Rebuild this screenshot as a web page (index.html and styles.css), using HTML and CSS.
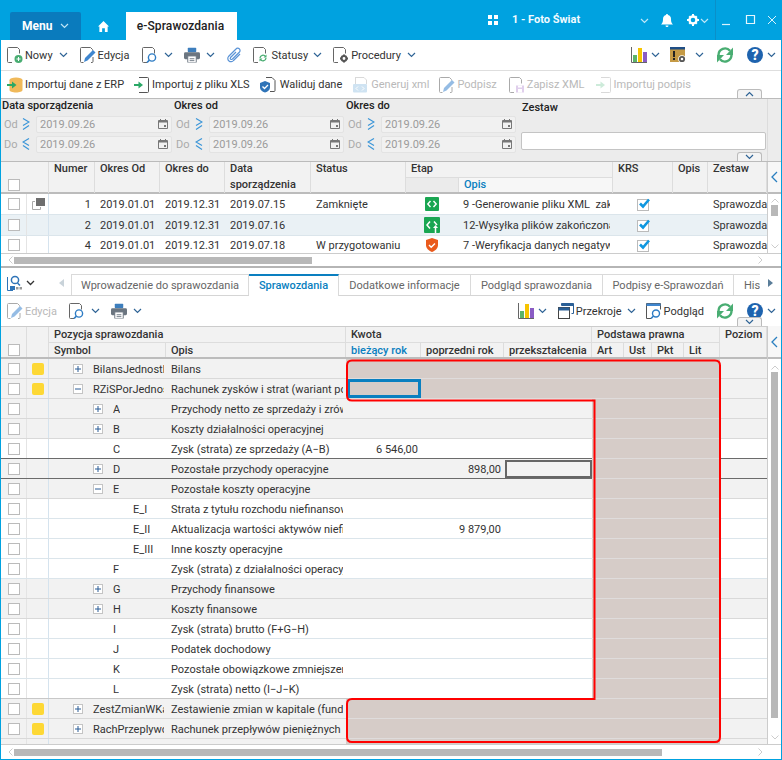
FILE: index.html
```html
<!DOCTYPE html>
<html lang="pl">
<head>
<meta charset="utf-8">
<title>e-Sprawozdania</title>
<link rel="stylesheet" href="styles.css">
</head>
<body>
<svg class="defs" width="0" height="0" aria-hidden="true">
  <symbol id="chev" viewBox="0 0 9 6"><path d="M1 1l3.5 3.5L8 1" fill="none" stroke="#2f6496" stroke-width="1.2"/></symbol>
  <symbol id="chevw" viewBox="0 0 9 6"><path d="M1 1l3.5 3.5L8 1" fill="none" stroke="#bfe6f7" stroke-width="1.2"/></symbol>
  <symbol id="page" viewBox="0 0 16 16"><path d="M5 15.500H1.500a1 1 0 0 1-1-1V1.500a1 1 0 0 1 1-1h9l2 2v4" fill="none" stroke="#666"/></symbol>
  <symbol id="preview" viewBox="0 0 16 16"><path d="M5 15.500H1.500a1 1 0 0 1-1-1V1.500a1 1 0 0 1 1-1h9l2 2v4" fill="none" stroke="#666"/><circle cx="10" cy="10.500" r="3.600" fill="none" stroke="#2e7cc4" stroke-width="1.400"/><path d="M7.400 13.200L5 15.500" stroke="#2e7cc4" stroke-width="1.600"/></symbol>
  <symbol id="pencil" viewBox="0 0 16 16"><path d="M3.500 15.500H1.500a1 1 0 0 1-1-1V1.500a1 1 0 0 1 1-1h9l2 2v1M13 10v4.500a1 1 0 0 1-1 1h-1" fill="none" stroke="#666"/><path d="M4 15l1-4 8-8 2.500 2.500-8 8z" fill="#3f86cf"/></symbol>
  <symbol id="printer" viewBox="0 0 17 16"><rect x="4" y="0" width="9" height="5" rx="1" fill="#3d7ebd"/><rect x="0" y="5" width="17" height="7.500" rx="1.500" fill="#6b7580"/><rect x="4" y="9" width="9" height="7" fill="#fff" stroke="#6b7580"/><path d="M6 12h5M6 14h5" stroke="#6b7580"/></symbol>
  <symbol id="arrows" viewBox="0 0 16 16"><path d="M1.500 8A6.500 6.500 0 0 1 13 3.800" fill="none" stroke="#49ad72" stroke-width="2.400"/><path d="M16 .5V8H9z" fill="#49ad72"/><path d="M14.500 8A6.500 6.500 0 0 1 3 12.200" fill="none" stroke="#49ad72" stroke-width="2.400"/><path d="M0 15.500V8h7z" fill="#49ad72"/></symbol>
  <symbol id="chart" viewBox="0 0 16 16"><path d="M.5 0v15.500H16" fill="none" stroke="#666"/><rect x="2" y="8" width="4" height="7" fill="#5cb46a"/><rect x="7" y="1" width="4" height="14" fill="#f7c400"/><rect x="12" y="5" width="4" height="10" fill="#8a5cc4"/></symbol>
  <symbol id="help" viewBox="0 0 16 16"><circle cx="8" cy="8" r="8" fill="#1e63ae"/><text x="8" y="13" text-anchor="middle" font-family="Roboto" font-weight="900" font-size="14" fill="#fff">?</text></symbol>
  <symbol id="cal" viewBox="0 0 10 10"><path d="M.5 1.500h9v8h-9z" fill="none" stroke="#777"/><path d="M.5 2h9v1.500h-9zM2 0h1v2H2zM7 0h1v2H7zM6 6h2v2H6z" fill="#777"/></symbol>
  <symbol id="dblr" viewBox="0 0 8 12"><path d="M1 .5L7 4 1 7.500M7 7.500L1 11.500" fill="none" stroke="#3a95d8" stroke-width="1.200"/></symbol>
  <symbol id="dbll" viewBox="0 0 8 12"><path d="M7 .5L1 4l6 3.500M1 7.500l6 4" fill="none" stroke="#3a95d8" stroke-width="1.200"/></symbol>
  <symbol id="tick" viewBox="0 0 13 13"><rect x=".5" y="1.500" width="11" height="11" fill="#fff" stroke="#bbb"/><path d="M3 5.500l3 3L12 1.500" fill="none" stroke="#0f97e0" stroke-width="2.600"/></symbol>
  <symbol id="plus" viewBox="0 0 10 10"><rect x=".5" y=".5" width="9" height="9" fill="#fff" stroke="#c4c4c4"/><path d="M2 5h6M5 2v6" stroke="#2a5c96"/></symbol>
  <symbol id="minus" viewBox="0 0 10 10"><rect x=".5" y=".5" width="9" height="9" fill="#fff" stroke="#c4c4c4"/><path d="M2 5h6" stroke="#2a5c96"/></symbol>
</svg>

<div class="window">
  <header class="topbar">
    <div class="menu">Menu <svg class="chev-top"><use href="#chevw"/></svg></div>
    <svg class="home" viewBox="0 0 12 12"><path d="M6 0l6 6h-1.500v6H7.500V8h-3v4H1.500V6H0z" fill="#fff"/></svg>
    <div class="apptab">e-Sprawozdania</div>
    <div class="grow"></div>
    <svg class="apps" viewBox="0 0 10 10"><path d="M0 0h4v4H0zM6 0h4v4H6zM0 6h4v4H0zM6 6h4v4H6z" fill="#fff"/></svg>
    <div class="company">1 - Foto Świat</div>
    <svg class="chev-top c1"><use href="#chevw"/></svg>
    <svg class="bell" viewBox="0 0 12 13"><path d="M6 0c.7 0 1 .5 1 1 2 .5 3 2 3 4 0 3 .5 4 2 5.500H0C1.500 9 2 8 2 5c0-2 1-3.500 3-4 0-.5.3-1 1-1zM4.500 11.500h3a1.500 1.500 0 0 1-3 0z" fill="#fff"/></svg>
    <svg class="gear" viewBox="0 0 12 12"><circle cx="6" cy="6" r="3.500" fill="none" stroke="#fff" stroke-width="2.400"/><path d="M5 0h2v2H5zM5 10h2v2H5zM0 5h2v2H0zM10 5h2v2h-2zM1.500 3L3 1.500 4 2.500 2.500 4zM9 1.500L10.500 3 9.500 4 8 2.500zM1.500 9L3 10.500 4 9.500 2.500 8zM10.500 9L9 10.500 8 9.500 9.500 8z" fill="#fff"/></svg>
    <svg class="chev-top c2"><use href="#chevw"/></svg>
    <div class="winbtns">
      <svg class="wb" viewBox="0 0 12 12"><path d="M1 10.500h8" stroke="#d9f2fc" stroke-width="1.200"/></svg>
      <svg class="wb" viewBox="0 0 12 12"><path d="M2.500 1.500h8v8h-8z" fill="none" stroke="#e6f6fd" stroke-width="1.200"/></svg>
      <svg class="wb" viewBox="0 0 12 12"><path d="M2 2l8 8M10 2l-8 8" stroke="#d9f2fc" stroke-width="1"/></svg>
    </div>
  </header>

  <main class="content">
    <div class="tb tb1">
      <span class="btn"><svg class="ic" viewBox="0 0 16 16"><use href="#page"/><circle cx="11.500" cy="12" r="4" fill="#49ad72"/><path d="M9.500 12h4M11.500 10v4" stroke="#fff"/></svg>Nowy</span>
      <svg class="chev m6"><use href="#chev"/></svg>
      <span class="btn m12"><svg class="ic" viewBox="0 0 16 16"><use href="#pencil"/></svg>Edycja</span>
      <svg class="ic m13" viewBox="0 0 16 16"><use href="#preview"/></svg>
      <svg class="chev m6"><use href="#chev"/></svg>
      <svg class="ic m11" viewBox="0 0 17 16"><use href="#printer"/></svg>
      <svg class="chev m6"><use href="#chev"/></svg>
      <svg class="ic m11" viewBox="0 0 16 16"><path d="M14 7l-6.500 6.500a3 3 0 0 1-5-4L10 2a2.200 2.200 0 0 1 3.500 3L6.500 12a1.100 1.100 0 0 1-2-1.500L10 5" fill="none" stroke="#5a93d6" stroke-width="1.200"/></svg>
      <span class="btn m11"><svg class="ic" viewBox="0 0 16 16"><use href="#page"/><path d="M7 11a3 3 0 0 1 5.500-1.500M13 11a3 3 0 0 1-5.500 1.500" fill="none" stroke="#49ad72" stroke-width="1.300"/><path d="M13.500 7.500v3h-3zM6.500 14.500v-3h3z" fill="#49ad72"/></svg>Statusy</span>
      <svg class="chev m5"><use href="#chev"/></svg>
      <span class="btn m11"><svg class="ic" viewBox="0 0 16 16"><use href="#page"/><circle cx="11" cy="11.500" r="2.400" fill="none" stroke="#555" stroke-width="2"/><path d="M10 7.500h2v1.500h-2zM10 14h2v1.500h-2zM7 10.500h1.500v2H7zM13.500 10.500H15v2h-1.500z" fill="#555"/></svg>Procedury</span>
      <svg class="chev m6"><use href="#chev"/></svg>
      <div class="grow"></div>
      <svg class="ic" viewBox="0 0 16 16"><use href="#chart"/></svg>
      <svg class="chev m4"><use href="#chev"/></svg>
      <svg class="ic m10" viewBox="0 0 16 16"><rect width="15" height="15" fill="#c59a45"/><rect width="15" height="2.500" fill="#1f4e86"/><rect x="3" y="4" width="2" height="6" fill="#222"/><rect x="3" y="11" width="2" height="2" fill="#222"/><circle cx="12" cy="12" r="3.800" fill="#fff"/><circle cx="12" cy="12" r="2.200" fill="none" stroke="#555" stroke-width="1.800"/></svg>
      <svg class="chev m9"><use href="#chev"/></svg>
      <svg class="ic m13" viewBox="0 0 16 16"><use href="#arrows"/></svg>
      <svg class="ic m14" viewBox="0 0 16 16"><use href="#help"/></svg>
      <svg class="chev m4 last"><use href="#chev"/></svg>
    </div>

    <div class="tb tb2">
      <span class="btn"><svg class="ic" viewBox="0 0 16 16"><ellipse cx="9" cy="3" rx="6.500" ry="2.500" fill="#f0b95a"/><path d="M2.500 3v10c0 1.500 3 2.500 6.500 2.500s6.500-1 6.500-2.500V3z" fill="#f0b95a"/><path d="M0 8h7" stroke="#2aa866" stroke-width="2"/><path d="M5 4.500L9.500 8 5 11.500z" fill="#2aa866"/></svg>Importuj dane z ERP</span>
      <span class="btn m10"><svg class="ic" viewBox="0 0 16 16"><path d="M5 .5h8.500a1 1 0 0 1 1 1v13a1 1 0 0 1-1 1H5" fill="none" stroke="#555"/><path d="M0 8h5.500" stroke="#2aa866" stroke-width="2"/><path d="M4.500 4.500L9 8l-4.500 3.500z" fill="#2aa866"/></svg>Importuj z pliku XLS</span>
      <span class="btn m10 gap4"><svg class="ic" viewBox="0 0 16 16"><path d="M6 .5h6l3 3v10a1 1 0 0 1-1 1h-4" fill="none" stroke="#555"/><path d="M5 4l5 2v4.500c0 2.500-2 4-5 5-3-1-5-2.500-5-5V6z" fill="#2f74b8"/><path d="M2.500 9.500L4.500 11.500 8 8" fill="none" stroke="#fff" stroke-width="1.300"/></svg>Waliduj dane</span>
      <span class="btn off m11"><svg class="ic" viewBox="0 0 16 16"><path d="M2 .5h9l2.500 2.500v4M2.500 7V1" fill="none" stroke="#bbb"/><rect x="0" y="7" width="14" height="8.500" rx="1" fill="#a9cde8"/><path d="M5 9.500L3 11.500l2 2M9 9.500l2 2-2 2" fill="none" stroke="#fff"/></svg>Generuj xml</span>
      <span class="btn off m10"><svg class="ic" viewBox="0 0 16 16"><use href="#pencil"/></svg>Podpisz</span>
      <span class="btn off m12"><svg class="ic" viewBox="0 0 16 16"><use href="#page"/><rect x="7" y="8.500" width="8" height="7" fill="#c8a9de"/><rect x="9" y="8.500" width="4" height="2" fill="#fff"/><rect x="9" y="12" width="4" height="3.500" fill="#fff"/></svg>Zapisz XML</span>
      <span class="btn off m11"><svg class="ic" viewBox="0 0 16 16"><path d="M5 .5h8.500a1 1 0 0 1 1 1v13a1 1 0 0 1-1 1H5" fill="none" stroke="#bbb"/><path d="M0 8h5.500" stroke="#a6dcbd" stroke-width="2"/><path d="M4.500 4.500L9 8l-4.500 3.500z" fill="#a6dcbd"/></svg>Importuj podpis</span>
      <div class="fold up"><svg class="chev"><use href="#chev"/></svg></div>
    </div>

    <section class="filters">
      <div class="fgroup">
        <div class="flabel">Data sporządzenia</div>
        <div class="frow"><span class="fk">Od</span><svg class="dbl"><use href="#dblr"/></svg><div class="finput">2019.09.26<svg class="calic"><use href="#cal"/></svg></div></div>
        <div class="frow"><span class="fk">Do</span><svg class="dbl"><use href="#dbll"/></svg><div class="finput">2019.09.26<svg class="calic"><use href="#cal"/></svg></div></div>
      </div>
      <div class="fgroup">
        <div class="flabel">Okres od</div>
        <div class="frow"><span class="fk">Od</span><svg class="dbl"><use href="#dblr"/></svg><div class="finput">2019.09.26<svg class="calic"><use href="#cal"/></svg></div></div>
        <div class="frow"><span class="fk">Do</span><svg class="dbl"><use href="#dbll"/></svg><div class="finput">2019.09.26<svg class="calic"><use href="#cal"/></svg></div></div>
      </div>
      <div class="fgroup">
        <div class="flabel">Okres do</div>
        <div class="frow"><span class="fk">Od</span><svg class="dbl"><use href="#dblr"/></svg><div class="finput">2019.09.26<svg class="calic"><use href="#cal"/></svg></div></div>
        <div class="frow"><span class="fk">Do</span><svg class="dbl"><use href="#dbll"/></svg><div class="finput">2019.09.26<svg class="calic"><use href="#cal"/></svg></div></div>
      </div>
      <div class="fset">
        <div class="flabel">Zestaw</div>
        <div class="fsetinput"></div>
      </div>
      <div class="fside"></div>
      <div class="fold down"><svg class="chev"><use href="#chev"/></svg></div>
    </section>

    <section class="upper">
      <div class="ugrid">
        <div class="uhead">
          <div class="h hcheck"><span class="box"></span></div>
          <div class="h"></div>
          <div class="h">Numer</div>
          <div class="h">Okres Od</div>
          <div class="h">Okres do</div>
          <div class="h hwrap">Data<br>sporządzenia</div>
          <div class="h">Status</div>
          <div class="h hetap">
            <div class="etap-top">Etap</div>
            <div class="etap-sub"><span class="etap-blank"></span><span class="etap-opis">Opis</span></div>
          </div>
          <div class="h">KRS</div>
          <div class="h">Opis</div>
          <div class="h">Zestaw</div>
        </div>
        <div class="urow">
          <div class="c cc"><span class="box"></span></div>
          <div class="c cc"><svg class="copyic" viewBox="0 0 13 12"><path d="M3 3.500H.5v8h8V9" fill="none" stroke="#aaa"/><rect x="4" y="0" width="9" height="8" fill="#6e6e6e"/></svg></div>
          <div class="c num">1</div><div class="c">2019.01.01</div><div class="c">2019.12.31</div><div class="c">2019.07.15</div><div class="c">Zamknięte</div>
          <div class="c cc"><svg class="etapic" viewBox="0 0 14 14"><rect width="14" height="14" rx="1" fill="#1aa652"/><path d="M5.500 4L2.800 7l2.700 3M8.500 4l2.700 3-2.700 3" fill="none" stroke="#fff" stroke-width="1.400"/></svg></div>
          <div class="c">9 -Generowanie pliku XML  zakończone</div>
          <div class="c cc"><svg class="tick"><use href="#tick"/></svg></div><div class="c"></div><div class="c">Sprawozdanie</div>
        </div>
        <div class="urow alt">
          <div class="c cc"><span class="box"></span></div>
          <div class="c cc"></div>
          <div class="c num">2</div><div class="c">2019.01.01</div><div class="c">2019.12.31</div><div class="c">2019.07.16</div><div class="c"></div>
          <div class="c cc"><svg class="etapic wide" viewBox="0 0 16 16"><rect width="16" height="16" rx="1" fill="#1aa652"/><path d="M6 4.500L3 8l3 3.500M10 4.500L13 8M11.500 16v-6" fill="none" stroke="#fff" stroke-width="1.500"/><path d="M9 11l2.500-3 2.500 3z" fill="#fff"/></svg></div>
          <div class="c">12-Wysyłka plików zakończona</div>
          <div class="c cc"><svg class="tick"><use href="#tick"/></svg></div><div class="c"></div><div class="c">Sprawozdanie</div>
        </div>
        <div class="urow cut">
          <div class="c cc"><span class="box"></span></div>
          <div class="c cc"></div>
          <div class="c num">4</div><div class="c">2019.01.01</div><div class="c">2019.12.31</div><div class="c">2019.07.18</div><div class="c">W przygotowaniu</div>
          <div class="c cc"><svg class="shieldic" viewBox="0 0 12 14"><path d="M6 0l6 2v5c0 3.500-2.500 5.500-6 7-3.500-1.500-6-3.500-6-7V2z" fill="#ea5a1c"/><path d="M3 7l2.200 2.200L9 5.500" fill="none" stroke="#fff" stroke-width="1.400"/></svg></div>
          <div class="c">7 -Weryfikacja danych negatywna</div>
          <div class="c cc"><svg class="tick"><use href="#tick"/></svg></div><div class="c"></div><div class="c">Sprawozdanie</div>
        </div>
      </div>
      <aside class="side">
        <div class="sidehead uside"><svg class="sidearrow" viewBox="0 0 7 12"><path d="M6 1L1 6l5 5" fill="none" stroke="#2a7fc0" stroke-width="1.300"/></svg></div>
        <div class="vscroll small"><svg class="sa" viewBox="0 0 8 5"><path d="M.5 4.500L4 1l3.500 3.500" fill="none" stroke="#ccc"/></svg><div class="vthumb t1"></div><div class="grow"></div><svg class="sa" viewBox="0 0 8 5"><path d="M.5.500L4 4 7.500.500" fill="none" stroke="#ccc"/></svg></div>
      </aside>
    </section>
    <div class="hscroll hs1"><svg class="sah" viewBox="0 0 5 8"><path d="M4.500.5L1 4l3.500 3.500" fill="none" stroke="#ccc"/></svg><div class="hthumb t1"></div><div class="grow"></div><svg class="sah r" viewBox="0 0 5 8"><path d="M.5.5L4 4 .5 7.500" fill="none" stroke="#ccc"/></svg></div>

    <div class="splitter"></div>

    <nav class="tabsrow">
      <svg class="lookic" viewBox="0 0 16 16"><path d="M.5 2v13.500H6" fill="none" stroke="#2f74b8"/><circle cx="8" cy="5" r="3.600" fill="none" stroke="#2f74b8" stroke-width="1.500"/><path d="M10.500 8l2.500 2.500" stroke="#2f74b8" stroke-width="1.500"/><rect x="3" y="11" width="5" height="4" fill="#2f74b8"/><rect x="9" y="12" width="2.500" height="2.500" fill="#999"/><rect x="12.500" y="12" width="2.500" height="2.500" fill="#999"/></svg>
      <svg class="chevdark" viewBox="0 0 9 6"><path d="M1 1l3.500 3.500L8 1" fill="none" stroke="#333" stroke-width="1.300"/></svg>
      <svg class="tabarrow" viewBox="0 0 5 8"><path d="M5 0v8L0 4z" fill="#c9d3da"/></svg>
      <div class="tab t1">Wprowadzenie do sprawozdania</div>
      <div class="tab active t2">Sprawozdania</div>
      <div class="tab t3">Dodatkowe informacje</div>
      <div class="tab t4">Podgląd sprawozdania</div>
      <div class="tab t5">Podpisy e-Sprawozdań</div>
      <div class="tab t6">Historia</div>
      <svg class="tabarrow r" viewBox="0 0 5 8"><path d="M0 0v8l5-4z" fill="#5a7d99"/></svg>
    </nav>

    <div class="tb tb3">
      <span class="btn off"><svg class="ic" viewBox="0 0 16 16"><use href="#pencil"/></svg>Edycja</span>
      <svg class="ic m12" viewBox="0 0 16 16"><use href="#preview"/></svg>
      <svg class="chev m6"><use href="#chev"/></svg>
      <svg class="ic m11" viewBox="0 0 17 16"><use href="#printer"/></svg>
      <svg class="chev m6"><use href="#chev"/></svg>
      <div class="grow"></div>
      <svg class="ic" viewBox="0 0 16 16"><use href="#chart"/></svg>
      <svg class="chev m4"><use href="#chev"/></svg>
      <span class="btn m11"><svg class="ic" viewBox="0 0 16 16"><path d="M3.500 2.500V.5h12v10h-2" fill="none" stroke="#2a5f96"/><rect x="3.500" y=".5" width="12" height="2.500" fill="#2a5f96"/><rect x=".5" y="4.500" width="11" height="11" fill="#fff" stroke="#444"/><rect x=".5" y="4.500" width="11" height="3" fill="#2a5f96"/></svg>Przekroje</span>
      <svg class="chev m5"><use href="#chev"/></svg>
      <span class="btn m10"><svg class="ic" viewBox="0 0 16 16"><path d="M5 15.500H.5V.5h14v6" fill="none" stroke="#555"/><path d="M.5.500h14V3H.5z" fill="#3f86cf"/><circle cx="10" cy="10.500" r="3.500" fill="none" stroke="#2e7cc4" stroke-width="1.400"/><path d="M7.500 13L5 15.500" stroke="#2e7cc4" stroke-width="1.600"/></svg>Podgląd</span>
      <svg class="ic m13" viewBox="0 0 16 16"><use href="#arrows"/></svg>
      <svg class="ic m14" viewBox="0 0 16 16"><use href="#help"/></svg>
      <svg class="chev m4 last"><use href="#chev"/></svg>
      <div class="fold down3"><svg class="chev"><use href="#chev"/></svg></div>
    </div>

    <section class="lower">
      <div class="lgrid">
        <div class="lhead">
          <div class="lh hcheck lspan a1"><span class="box"></span></div>
          <div class="lh lspan a2"></div>
          <div class="lh g2">Pozycja sprawozdania</div>
          <div class="lh g3">Kwota</div>
          <div class="lh g4">Podstawa prawna</div>
          <div class="lh lspan a12">Poziom</div>
          <div class="lh2">Symbol</div>
          <div class="lh2">Opis</div>
          <div class="lh2 blue">bieżący rok</div>
          <div class="lh2">poprzedni rok</div>
          <div class="lh2">przekształcenia</div>
          <div class="lh2">Art</div>
          <div class="lh2">Ust</div>
          <div class="lh2">Pkt</div>
          <div class="lh2">Lit</div>
        </div>

        <div class="lrow grey">
          <div class="l cc"><span class="box"></span></div><div class="l cc"><span class="mark"></span></div>
          <div class="l sym lv1"><svg class="tg"><use href="#plus"/></svg><span class="clip">BilansJednostkowy</span></div>
          <div class="l">Bilans</div><div class="l amt sel"></div><div class="l amt sel"></div><div class="l amt sel"></div><div class="l sel"></div><div class="l"></div>
        </div>
        <div class="lrow grey">
          <div class="l cc"><span class="box"></span></div><div class="l cc"><span class="mark"></span></div>
          <div class="l sym lv1"><svg class="tg"><use href="#minus"/></svg><span class="clip">RZiSPorJednostkowy</span></div>
          <div class="l">Rachunek zysków i strat (wariant porównawczy)</div><div class="l amt sel focus"></div><div class="l amt sel"></div><div class="l amt sel"></div><div class="l sel"></div><div class="l"></div>
        </div>
        <div class="lrow grey">
          <div class="l cc"><span class="box"></span></div><div class="l cc"></div>
          <div class="l sym lv2"><svg class="tg"><use href="#plus"/></svg><span class="clip">A</span></div>
          <div class="l">Przychody netto ze sprzedaży i zrównane z nimi</div><div class="l amt"></div><div class="l amt"></div><div class="l amt"></div><div class="l sel"></div><div class="l"></div>
        </div>
        <div class="lrow grey">
          <div class="l cc"><span class="box"></span></div><div class="l cc"></div>
          <div class="l sym lv2"><svg class="tg"><use href="#plus"/></svg><span class="clip">B</span></div>
          <div class="l">Koszty działalności operacyjnej</div><div class="l amt"></div><div class="l amt"></div><div class="l amt"></div><div class="l sel"></div><div class="l"></div>
        </div>
        <div class="lrow">
          <div class="l cc"><span class="box"></span></div><div class="l cc"></div>
          <div class="l sym lv2 notg"><span class="clip">C</span></div>
          <div class="l">Zysk (strata) ze sprzedaży (A−B)</div><div class="l amt">6 546,00</div><div class="l amt"></div><div class="l amt"></div><div class="l sel"></div><div class="l"></div>
        </div>
        <div class="lrow grey darkline">
          <div class="l cc"><span class="box"></span></div><div class="l cc"></div>
          <div class="l sym lv2"><svg class="tg"><use href="#plus"/></svg><span class="clip">D</span></div>
          <div class="l">Pozostałe przychody operacyjne</div><div class="l amt"></div><div class="l amt">898,00</div><div class="l amt focus2"></div><div class="l sel"></div><div class="l"></div>
        </div>
        <div class="lrow grey">
          <div class="l cc"><span class="box"></span></div><div class="l cc"></div>
          <div class="l sym lv2"><svg class="tg"><use href="#minus"/></svg><span class="clip">E</span></div>
          <div class="l">Pozostałe koszty operacyjne</div><div class="l amt"></div><div class="l amt"></div><div class="l amt"></div><div class="l sel"></div><div class="l"></div>
        </div>
        <div class="lrow">
          <div class="l cc"><span class="box"></span></div><div class="l cc"></div>
          <div class="l sym lv3"><span class="clip">E_I</span></div>
          <div class="l">Strata z tytułu rozchodu niefinansowych aktywów</div><div class="l amt"></div><div class="l amt"></div><div class="l amt"></div><div class="l sel"></div><div class="l"></div>
        </div>
        <div class="lrow">
          <div class="l cc"><span class="box"></span></div><div class="l cc"></div>
          <div class="l sym lv3"><span class="clip">E_II</span></div>
          <div class="l">Aktualizacja wartości aktywów niefinansowych</div><div class="l amt"></div><div class="l amt">9 879,00</div><div class="l amt"></div><div class="l sel"></div><div class="l"></div>
        </div>
        <div class="lrow">
          <div class="l cc"><span class="box"></span></div><div class="l cc"></div>
          <div class="l sym lv3"><span class="clip">E_III</span></div>
          <div class="l">Inne koszty operacyjne</div><div class="l amt"></div><div class="l amt"></div><div class="l amt"></div><div class="l sel"></div><div class="l"></div>
        </div>
        <div class="lrow">
          <div class="l cc"><span class="box"></span></div><div class="l cc"></div>
          <div class="l sym lv2 notg"><span class="clip">F</span></div>
          <div class="l">Zysk (strata) z działalności operacyjnej</div><div class="l amt"></div><div class="l amt"></div><div class="l amt"></div><div class="l sel"></div><div class="l"></div>
        </div>
        <div class="lrow grey">
          <div class="l cc"><span class="box"></span></div><div class="l cc"></div>
          <div class="l sym lv2"><svg class="tg"><use href="#plus"/></svg><span class="clip">G</span></div>
          <div class="l">Przychody finansowe</div><div class="l amt"></div><div class="l amt"></div><div class="l amt"></div><div class="l sel"></div><div class="l"></div>
        </div>
        <div class="lrow grey">
          <div class="l cc"><span class="box"></span></div><div class="l cc"></div>
          <div class="l sym lv2"><svg class="tg"><use href="#plus"/></svg><span class="clip">H</span></div>
          <div class="l">Koszty finansowe</div><div class="l amt"></div><div class="l amt"></div><div class="l amt"></div><div class="l sel"></div><div class="l"></div>
        </div>
        <div class="lrow">
          <div class="l cc"><span class="box"></span></div><div class="l cc"></div>
          <div class="l sym lv2 notg"><span class="clip">I</span></div>
          <div class="l">Zysk (strata) brutto (F+G−H)</div><div class="l amt"></div><div class="l amt"></div><div class="l amt"></div><div class="l sel"></div><div class="l"></div>
        </div>
        <div class="lrow">
          <div class="l cc"><span class="box"></span></div><div class="l cc"></div>
          <div class="l sym lv2 notg"><span class="clip">J</span></div>
          <div class="l">Podatek dochodowy</div><div class="l amt"></div><div class="l amt"></div><div class="l amt"></div><div class="l sel"></div><div class="l"></div>
        </div>
        <div class="lrow">
          <div class="l cc"><span class="box"></span></div><div class="l cc"></div>
          <div class="l sym lv2 notg"><span class="clip">K</span></div>
          <div class="l">Pozostałe obowiązkowe zmniejszenia zysku</div><div class="l amt"></div><div class="l amt"></div><div class="l amt"></div><div class="l sel"></div><div class="l"></div>
        </div>
        <div class="lrow">
          <div class="l cc"><span class="box"></span></div><div class="l cc"></div>
          <div class="l sym lv2 notg"><span class="clip">L</span></div>
          <div class="l">Zysk (strata) netto (I−J−K)</div><div class="l amt"></div><div class="l amt"></div><div class="l amt"></div><div class="l sel"></div><div class="l"></div>
        </div>
        <div class="lrow grey graytop">
          <div class="l cc"><span class="box"></span></div><div class="l cc"><span class="mark"></span></div>
          <div class="l sym lv1"><svg class="tg"><use href="#plus"/></svg><span class="clip">ZestZmianWKapitale</span></div>
          <div class="l">Zestawienie zmian w kapitale (funduszu) własnym</div><div class="l amt sel"></div><div class="l amt sel"></div><div class="l amt sel"></div><div class="l sel"></div><div class="l"></div>
        </div>
        <div class="lrow grey">
          <div class="l cc"><span class="box"></span></div><div class="l cc"><span class="mark"></span></div>
          <div class="l sym lv1"><svg class="tg"><use href="#plus"/></svg><span class="clip">RachPrzeplywow</span></div>
          <div class="l">Rachunek przepływów pieniężnych</div><div class="l amt sel"></div><div class="l amt sel"></div><div class="l amt sel"></div><div class="l sel"></div><div class="l"></div>
        </div>
        <div class="lrow grey tail">
          <div class="l cc"><span class="box"></span></div><div class="l cc"></div><div class="l"></div><div class="l"></div><div class="l amt sel"></div><div class="l amt sel"></div><div class="l amt sel"></div><div class="l sel"></div><div class="l"></div>
        </div>
        <svg class="redmark" viewBox="0 0 766 386" width="766" height="386"><path d="M351 1.500H714q5 0 5 5V378q0 5-5 5H351q-5 0-5-5V345q0-5 5-5H593.500V41.500H351q-5 0-5-5V6.500q0-5 5-5z" fill="none" stroke="#f00" stroke-width="2"/></svg>
      </div>
      <aside class="side lside">
        <div class="sidehead"><svg class="sidearrow" viewBox="0 0 7 12"><path d="M6 1L1 6l5 5" fill="none" stroke="#2a7fc0" stroke-width="1.300"/></svg></div>
        <div class="vscroll"><svg class="sa" viewBox="0 0 8 5"><path d="M.5 4.500L4 1l3.500 3.500" fill="none" stroke="#ccc"/></svg><div class="vthumb t2"></div><div class="grow"></div><svg class="sa" viewBox="0 0 8 5"><path d="M.5.500L4 4 7.500.500" fill="none" stroke="#ccc"/></svg></div>
      </aside>
    </section>
    <div class="hscroll hs2"><svg class="sah" viewBox="0 0 5 8"><path d="M4.500.5L1 4l3.500 3.500" fill="none" stroke="#ccc"/></svg><div class="hthumb t2"></div><div class="grow"></div><svg class="sah r" viewBox="0 0 5 8"><path d="M.5.5L4 4 .5 7.500" fill="none" stroke="#ccc"/></svg></div>
  </main>
</div>
</body>
</html>
```
FILE: styles.css
```css
* { box-sizing: border-box; }
html, body { margin: 0; padding: 0; }
body { font-family: Roboto, "Liberation Sans", sans-serif; font-size: 11px; color: #333; overflow: hidden; }
svg { flex: none; display: block; }
.defs { position: absolute; }
.grow { flex: 1 1 auto; }

.window { width: 782px; height: 760px; background: #00a2e0; display: flex; flex-direction: column; }

/* top bar */
.topbar { height: 40px; flex: none; display: flex; align-items: flex-start; color: #fff; }
.menu { margin: 12px 0 0 10px; width: 71px; height: 28px; background: #0a7bbd; border-radius: 2px 2px 0 0; font-weight: 700; font-size: 12px; display: flex; align-items: center; padding-left: 12px; gap: 8px; }
.chev-top { width: 9px; height: 6px; }
.home { width: 11px; height: 11px; margin: 21px 0 0 17px; }
.apptab { margin: 12px 0 0 17px; width: 111px; height: 28px; background: #fff; color: #222; font-weight: 500; font-size: 12px; letter-spacing: .1px; display: flex; align-items: center; justify-content: center; padding-right: 2px; }
.apps { width: 10px; height: 10px; margin-top: 15px; }
.company { margin: 13px 0 0 14px; font-weight: 700; font-size: 11px; width: 128px; line-height: 14px; color: #f2fbff; }
.chev-top.c1 { margin: 18px 0 0 0; }
.bell { width: 12px; height: 13px; margin: 14px 0 0 12px; }
.gear { width: 12px; height: 12px; margin: 14px 0 0 14px; }
.chev-top.c2 { margin: 18px 0 0 1px; }
.winbtns { width: 67px; height: 40px; margin-left: 6px; border-left: 1px solid #0a8fc8; display: flex; padding: 14px 4px 0 5px; justify-content: space-between; }
.wb { width: 12px; height: 12px; }

.content { flex: 1; margin: 0 1px 1px; background: #fff; display: flex; flex-direction: column; position: relative; overflow: hidden; }

/* toolbars */
.tb { display: flex; align-items: center; padding-left: 6px; flex: none; position: relative; white-space: nowrap; }
.tb1 { height: 31px; border-bottom: 1px solid #dedede; }
.tb2 { height: 27px; }
.tb3 { height: 30px; }
.btn { display: flex; align-items: center; gap: 2px; }
.btn.gap4 { gap: 4px; }
.btn.off { color: #b9b9b9; }
.btn.off .ic { opacity: .55; }
.ic { width: 16px; height: 16px; }
.chev { width: 9px; height: 6px; }
.last { margin-right: 5px; }
.m4 { margin-left: 4px; } .m5 { margin-left: 5px; } .m6 { margin-left: 6px; }
.m9 { margin-left: 9px; } .m10 { margin-left: 10px; } .m11 { margin-left: 11px; }
.m12 { margin-left: 12px; } .m13 { margin-left: 13px; } .m14 { margin-left: 14px; }

.fold { position: absolute; width: 25px; height: 9px; background: #f4f4f4; border: 1px solid #bbb; border-bottom: 0; border-radius: 3px 3px 0 0; right: 19px; bottom: 0; display: flex; justify-content: center; align-items: center; z-index: 2; }
.fold .chev { margin: 0; }
.fold.up .chev { transform: rotate(180deg); }

/* filters */
.filters { height: 64px; flex: none; background: #ececec; border-top: 1px solid #bbb; border-bottom: 1px solid #bbb; display: flex; position: relative; }
.fgroup { width: 172px; flex: none; }
.flabel { font-weight: 500; color: #222; height: 15px; line-height: 14px; padding-left: 1px; }
.frow { display: flex; align-items: center; height: 20px; padding-right: 1px; }
.fk { width: 21px; padding-left: 3px; color: #aaa; }
.fgroup + .fgroup .fk { width: 22px; }
.dbl { width: 8px; height: 12px; margin-right: 6px; }
.finput { flex: 1; height: 17px; background: #f1f1f1; border: 1px solid #e3e3e3; border-radius: 2px; color: #9b9b9b; padding: 0 3px; display: flex; align-items: center; justify-content: space-between; }
.calic { width: 10px; height: 10px; }
.fset { width: 250px; padding: 2px 0 0 4px; }
.fsetinput { margin: 16px 0 0 0; width: 245px; height: 18px; background: #fff; border: 1px solid #c4c4c4; border-radius: 2px; }
.fset .flabel { padding-left: 1px; }
.fside { flex: 1; border-left: 1px solid #dcdcdc; }

/* upper grid */
.upper { display: flex; height: 92px; flex: none; border-bottom: 1px solid #ccc; }
.ugrid { width: 767px; flex: none; overflow: hidden; border-right: 1px solid #ccc; }
.urow { display: grid; grid-template-columns: 26px 22px 46px 65px 65px 86px 95px 52px 155px 60px 35px 59px; height: 21px; border-bottom: 1px solid #dbe5eb; }
.uhead { display: grid; grid-template-columns: 26px 22px 46px 65px 65px 86px 95px 207px 60px 35px 59px; height: 32px; background: #f2f2f2; border-bottom: 2px solid #bcbcbc; }
.h { padding: 0 0 0 5px; font-weight: 500; border-right: 1px solid #ddd; color: #333; line-height: 14px; white-space: nowrap; }
.hwrap { line-height: 16px; margin-top: -1px; }
.hcheck { padding: 17px 0 0 7px; border-right: 0; }
.hcheck + .h { padding: 0; }
.hetap { padding: 0; }
.etap-top { height: 16px; padding: 0 0 0 5px; border-bottom: 1px solid #ddd; line-height: 14px; }
.etap-sub { display: flex; height: 14px; }
.etap-blank { width: 52px; background: #ebebeb; }
.etap-opis { padding-left: 5px; color: #0a7fc0; border-left: 1px solid #ddd; flex: 1; background: #f7f7f7; line-height: 14px; }
.urow.alt { background: #eaf1f5; }
.urow.cut { height: 18px; border-bottom: 0; }
.c { padding: 0 0 0 5px; line-height: 21px; white-space: pre; overflow: hidden; }
.urow .c:nth-child(9) { margin-right: 3px; }
.cut .c { line-height: 19px; }
.cc { padding: 0; display: flex; align-items: center; justify-content: center; }
.urow .cc:nth-child(1), .urow .cc:nth-child(2), .lrow .cc:nth-child(1), .lrow .cc:nth-child(2) { border-right: 1px solid #d5e3ee; }
.urow .cc:nth-child(2), .lrow .cc:nth-child(2) { padding-left: 1px; }
.urow .cc:nth-child(1), .lrow .cc:nth-child(1) { border-right-color: #e4e4e4; }
.num { text-align: right; padding: 0 4px 0 0; }
.box { display: block; width: 12px; height: 12px; background: #fff; border: 1px solid #bbb; }
.copyic { width: 13px; height: 12px; }
.etapic { width: 14px; height: 14px; }
.etapic.wide { width: 16px; height: 16px; }
.shieldic { width: 12px; height: 14px; }
.tick { width: 13px; height: 13px; }
.side { flex: 1; display: flex; flex-direction: column; }
.sidehead { height: 33px; border-bottom: 2px solid #bcbcbc; display: flex; align-items: center; justify-content: center; background: #f7f7f7; }
.sidehead.uside { height: 32px; }
.sidearrow { width: 7px; height: 12px; }
.vscroll { flex: 1; display: flex; flex-direction: column; align-items: center; padding: 4px 0; gap: 2px; }
.sa { width: 8px; height: 5px; }
.vthumb { width: 7px; background: #b8b8b8; }
.vthumb.t1 { height: 11px; }
.vthumb.t2 { height: 346px; }
.hscroll { flex: none; display: flex; align-items: center; padding: 0 18px 0 7px; position: relative; }
.hs1 { height: 12px; }
.hs2 { height: 14px; }
.sah { width: 5px; height: 8px; }
.hthumb { height: 7px; background: #b8b8b8; margin-left: 1px; }
.hthumb.t1 { width: 298px; }
.hthumb.t2 { width: 648px; }
.splitter { height: 2px; flex: none; background: #b5b5b5; }

/* lower tabs */
.tabsrow { height: 28px; flex: none; display: flex; align-items: flex-end; padding-left: 6px; border-bottom: 1px solid #d5d5d5; background: #fff; position: relative; }
.lookic { width: 16px; height: 16px; margin-bottom: 4px; }
.chevdark { width: 9px; height: 6px; margin: 0 0 9px 3px; }
.tabarrow { width: 5px; height: 8px; margin: 0 0 8px 24px; }
.tabarrow.r { margin-left: 8px; }
.tab { height: 21px; line-height: 21px; border: 1px solid #dadada; border-bottom: 0; border-left: 0; text-align: center; color: #666; overflow: hidden; white-space: nowrap; }
.tab.t1 { width: 178px; margin-left: 7px; border-left: 1px solid #dadada; }
.tab.t2 { width: 90px; }
.tab.t3 { width: 132px; }
.tab.t4 { width: 132px; }
.tab.t5 { width: 131px; }
.tab.t6 { width: 26px; text-align: left; padding-left: 10px; border-right: 0; }
.tab.active { color: #0a7fc0; font-weight: 500; background: #fff; border-top: 2px solid #0a7fc0; line-height: 20px; margin-bottom: -1px; height: 22px; }

/* lower grid */
.lower { display: flex; height: 419px; flex: none; border-bottom: 1px solid #ccc; }
.lgrid { width: 767px; flex: none; position: relative; overflow: hidden; border-right: 1px solid #ccc; }
.lhead { display: grid; grid-template-columns: 26px 22px 117px 180px 75px 83px 88px 32px 28px 32px 36px 47px; grid-template-rows: 16px 14px; height: 33px; background: #f2f2f2; border-top: 1px solid #ccc; border-bottom: 2px solid #bcbcbc; font-weight: 500; white-space: nowrap; }
.lh { padding: 0 0 0 5px; line-height: 15px; border-bottom: 1px solid #ddd; border-right: 1px solid #ddd; }
.lspan { grid-row: 1 / 3; border-bottom: 0; }
.a1 { grid-column: 1; }
.a2 { grid-column: 2; }
.a12 { grid-column: 12; }
.g2 { grid-column: 3 / span 2; }
.g3 { grid-column: 5 / span 3; }
.g4 { grid-column: 8 / span 4; }
.lh.hcheck { padding: 17px 0 0 7px; }
.lh.hcheck + .lh { padding: 0; }
.lh2 { padding: 0 0 0 5px; line-height: 15px; border-right: 1px solid #ddd; }
.lh2.blue { color: #0a7fc0; }
.lrow { display: grid; grid-template-columns: 26px 22px 117px 180px 75px 83px 88px 128px 47px; height: 20px; border-bottom: 1px solid #dbe5eb; }
.lrow.grey { background: #f2f2f2; border-bottom-color: #d9d9d9; }
.lrow.tail { height: 5px; border-bottom: 0; }
.lrow.tail .box { margin-top: 6px; }
.lrow.darkline { border-bottom-color: #6b6b6b; box-shadow: 0 -1px 0 #6b6b6b; }
.lrow.graytop { box-shadow: 0 -1px 0 #c8c8c8; }
.l { padding: 0 3px 0 5px; line-height: 21px; white-space: nowrap; overflow: hidden; color: #333; }
.lrow .l:nth-child(4) { padding-right: 0; margin-right: 3px; }
.l.cc { padding: 0; overflow: visible; }
.sym { display: flex; align-items: center; padding-right: 2px; padding-top: 1px; }
.clip { overflow: hidden; }
.tg { width: 10px; height: 10px; margin-right: 10px; }
.lv1 { padding-left: 24px; }
.lv2 { padding-left: 44px; }
.lv2.notg { padding-left: 64px; }
.lv3 { padding-left: 84px; }
.amt { text-align: right; padding: 0 3px 0 0; }
.sel { background: #d6ccc8; margin-bottom: -1px; border-bottom: 1px solid #dfdcdc; position: relative; }
.focus { box-shadow: inset 0 0 0 3px #0a7fc0; margin: 0 0 -1px 1px; }
.focus2 { outline: 2px solid #666; outline-offset: -2px; margin: 1px 0 0 1px; }
.mark { display: block; width: 12px; height: 12px; background: #fdd835; border-radius: 2px; }
.redmark { position: absolute; left: 0; top: 33px; pointer-events: none; z-index: 3; }
.lside .vscroll { padding-top: 6px; }
```
